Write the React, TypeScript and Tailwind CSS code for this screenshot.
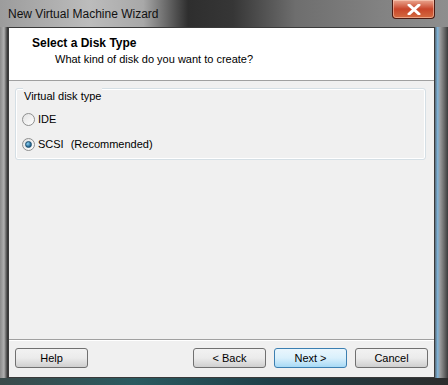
import React from 'react';

const font = { fontFamily: '"Liberation Sans", Arial, sans-serif' };

function Radio({ checked }: { checked?: boolean }) {
  return (
    <span className="relative inline-flex h-[13px] w-[13px] items-center justify-center rounded-full border border-[#8e8f8f] bg-gradient-to-br from-[#e2e2e2] to-[#ffffff]">
      {checked && (
        <span className="h-[7px] w-[7px] rounded-full border border-[#1c4f70] bg-[radial-gradient(circle_at_35%_35%,#8fd3f5,#1d5f8a_70%)]" />
      )}
    </span>
  );
}

function Button({ label, primary }: { label: string; primary?: boolean }) {
  return (
    <div
      className={
        'flex h-[20px] w-[73px] items-center justify-center rounded-[3px] border text-[11px] text-black ' +
        (primary
          ? 'border-[#3c7fb1] bg-gradient-to-b from-[#eaf6fd] via-[#d9f0fc] to-[#a7d9f5]'
          : 'border-[#707070] bg-gradient-to-b from-[#f2f2f2] via-[#ebebeb] to-[#cfcfcf]')
      }
    >
      {label}
    </div>
  );
}

export default function App() {
  return (
    <div className="flex h-[385px] w-[448px] flex-col overflow-hidden bg-[#6f6f6f]" style={font}>
      {/* Title bar */}
      <div className="flex h-[27px] shrink-0 items-start bg-[linear-gradient(90deg,#9c9c9c_0%,#bcbcbc_20%,#a8a8a8_32%,#2e2e2e_42%,#363636_52%,#6e6e6e_66%,#828282_85%,#8e8e8e_100%)]">
        <span className="ml-[8px] mt-[6px] text-[12px] leading-[16px] text-[#111]">New Virtual Machine Wizard</span>
        <div className="ml-auto mr-[13px] flex h-[19px] w-[43px] items-center justify-center rounded-b-[4px] border border-t-0 border-[#4a1a12] bg-gradient-to-b from-[#e9a58f] via-[#c8452a] to-[#d46a40] shadow-[inset_0_0_0_1px_rgba(255,220,200,0.5)]">
          <svg width="14" height="11" viewBox="0 0 14 11">
            <path d="M2 1 L12 10 M12 1 L2 10" stroke="#fff" strokeWidth="3" strokeLinecap="round" />
          </svg>
        </div>
      </div>

      <div className="flex flex-1">
        {/* Left frame */}
        <div className="w-[8px] shrink-0 bg-gradient-to-r from-[#8a8a8a] via-[#b0b0b0] to-[#2b2b2b]" />

        {/* Client area */}
        <div className="flex w-[427px] flex-col border border-[#3a3a3a] bg-[#f0f0f0] text-[11px] text-black">
          <div className="h-[53px] shrink-0 border-b border-[#a0a0a0] bg-white pl-[23px] pt-[7px]">
            <div className="text-[12px] font-bold leading-[16px]">Select a Disk Type</div>
            <div className="pl-[23px] leading-[16px]">What kind of disk do you want to create?</div>
          </div>

          <div className="flex flex-1 flex-col">
            <div className="relative ml-[6px] mr-[8px] mt-[7px] h-[72px] rounded-[3px] border border-[#d5dfe5] shadow-[inset_0_0_0_1px_#ffffff]">
              <span className="absolute left-[7px] top-[-1px] bg-[#f0f0f0] px-[1px] leading-[16px]">Virtual disk type</span>
              <div className="flex flex-col gap-[9px] pl-[6px] pt-[22px]">
                <div className="flex h-[16px] items-center gap-[3px]">
                  <Radio />
                  <span>IDE</span>
                </div>
                <div className="flex h-[16px] items-center gap-[3px]">
                  <Radio checked />
                  <span>SCSI</span>
                  <span className="ml-[4px]">(Recommended)</span>
                </div>
              </div>
            </div>

            <div className="flex-1" />

            <div className="border-t border-[#a0a0a0] shadow-[0_1px_0_#ffffff]" />
            <div className="flex items-center px-[6px] pb-[9px] pt-[8px]">
              <Button label="Help" />
              <div className="ml-auto flex gap-[8px]">
                <Button label="< Back" />
                <Button label="Next >" primary />
                <Button label="Cancel" />
              </div>
            </div>
          </div>
        </div>

        {/* Right frame */}
        <div className="w-[13px] shrink-0 bg-[linear-gradient(90deg,#5a6b78_0%,#7fb3d8_20%,#9a9a9a_40%,#6c6c6c_70%,#3c3c3c_100%)]" />
      </div>

      {/* Bottom frame */}
      <div className="h-[7px] shrink-0 bg-[linear-gradient(90deg,#3a4a4a,#2a5a60_30%,#1f3f48_60%,#2c2c2c)]" />
    </div>
  );
}
